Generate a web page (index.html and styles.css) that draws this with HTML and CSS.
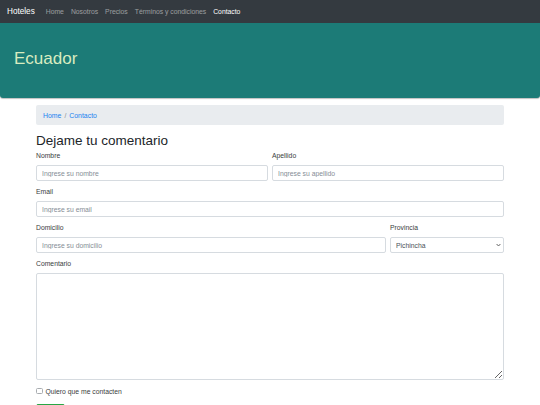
FILE: index.html
```html
<!DOCTYPE html>
<html lang="es">
<head>
<meta charset="utf-8">
<title>Hoteles - Contacto</title>
<link rel="stylesheet" href="styles.css">
</head>
<body>
<nav class="navbar">
  <a class="brand" href="#">Hoteles</a>
  <ul class="nav-links">
    <li><a href="#">Home</a></li>
    <li><a href="#">Nosotros</a></li>
    <li><a href="#">Precios</a></li>
    <li><a href="#">Términos y condiciones</a></li>
    <li><a class="active" href="#">Contacto</a></li>
  </ul>
</nav>
<header class="hero">
  <h1>Ecuador</h1>
</header>
<main class="container">
  <ol class="breadcrumb">
    <li><a href="#">Home</a></li>
    <li class="sep">/</li>
    <li><a href="#">Contacto</a></li>
  </ol>
  <h2 class="title">Dejame tu comentario</h2>
  <form class="form">
    <div class="row">
      <div class="group grow">
        <label>Nombre</label>
        <input class="control" type="text" placeholder="Ingrese su nombre">
      </div>
      <div class="group grow">
        <label>Apellido</label>
        <input class="control" type="text" placeholder="Ingrese su apellido">
      </div>
    </div>
    <div class="group">
      <label>Email</label>
      <input class="control" type="email" placeholder="Ingrese su email">
    </div>
    <div class="row">
      <div class="group wide">
        <label>Domicilio</label>
        <input class="control" type="text" placeholder="Ingrese su domicilio">
      </div>
      <div class="group narrow">
        <label>Provincia</label>
        <div class="select-wrap">
          <select class="control select">
            <option>Pichincha</option>
            <option>Guayas</option>
            <option>Azuay</option>
          </select>
          <svg class="chev" width="5" height="4" viewBox="0 0 5 4"><path d="M0.6 1 L2.5 3 L4.4 1" fill="none" stroke="#555" stroke-width="0.9"/></svg>
        </div>
      </div>
    </div>
    <div class="group">
      <label>Comentario</label>
      <textarea class="control area"></textarea>
    </div>
    <div class="check">
      <input type="checkbox" id="c1">
      <label for="c1">Quiero que me contacten</label>
    </div>
    <button class="btn" type="submit">Enviar</button>
  </form>
</main>
</body>
</html>
```
FILE: styles.css
```css
* { box-sizing: border-box; }
html, body { margin: 0; padding: 0; }
body {
  font-family: "Liberation Sans", Arial, sans-serif;
  font-size: 7px;
  color: #3a3d40;
  background: #fff;
}
a { text-decoration: none; }

.navbar {
  height: 23px;
  background: #343a40;
  display: flex;
  align-items: center;
  padding: 0 7px;
}
.brand {
  color: #fff;
  font-size: 8.2px;
  margin-right: 7.5px;
}
.nav-links {
  list-style: none;
  margin: 0;
  padding: 0;
  display: flex;
}
.nav-links a {
  display: block;
  padding: 0 3.5px;
  color: rgba(255,255,255,0.5);
  font-size: 6.8px;
}
.nav-links a.active { color: #fff; }

.hero {
  height: 75px;
  background: #1c7b77;
  border-radius: 0 0 3px 3px;
  box-shadow: 0 1px 1px rgba(0,0,0,0.25);
  display: flex;
  align-items: center;
  padding: 0 14px;
}
.hero h1 {
  margin: 0 0 4px;
  font-weight: 400;
  font-size: 17px;
  color: #d9ecc0;
}

.container {
  width: 468px;
  margin: 7px auto 0;
}
.breadcrumb {
  list-style: none;
  margin: 0 0 8px;
  height: 20px;
  padding: 0 7px;
  background: #e9ecef;
  border-radius: 2px;
  display: flex;
  align-items: center;
  gap: 3px;
  font-size: 6.9px;
}
.breadcrumb a { color: #1a82f0; }
.breadcrumb .sep { color: #8a9096; }

.title {
  margin: 0 0 2px;
  font-size: 13.5px;
  line-height: 16px;
  font-weight: 400;
  color: #212529;
}

.form { display: block; }
.row {
  display: flex;
  gap: 4px;
}
.group { margin-bottom: 6px; }
.grow { flex: 1; }
.wide { flex: 1; }
.narrow { width: 114px; }
.group > label {
  display: block;
  line-height: 10px;
  margin-bottom: 4px;
  font-size: 6.8px;
}
.control {
  display: block;
  width: 100%;
  height: 16px;
  padding: 0 5px;
  font-family: inherit;
  font-size: 6.8px;
  color: #495057;
  background: #fff;
  border: 1px solid #d6dbe0;
  border-radius: 2px;
  outline: none;
}
.control::placeholder { color: #868e96; }
.select-wrap { position: relative; }
.select {
  -webkit-appearance: none;
  appearance: none;
  padding-left: 5px;
}
.chev {
  position: absolute;
  right: 3px;
  top: 6px;
}
.area {
  height: 107px;
  resize: vertical;
  padding: 3px 5px;
}
.check {
  display: flex;
  align-items: center;
  height: 10px;
  margin-bottom: 8px;
  font-size: 6.8px;
}
.check input {
  -webkit-appearance: none;
  appearance: none;
  margin: 0 3px 0 0;
  width: 6.5px;
  height: 6.5px;
  border: 1px solid #a8acb0;
  border-radius: 1.5px;
  background: #fff;
}
.btn {
  display: block;
  width: 29px;
  height: 16px;
  padding: 5px 0 0;
  line-height: 8px;
  font-family: inherit;
  font-size: 7px;
  color: #fff;
  background: #28a745;
  border: 1px solid #28a745;
  border-radius: 2px;
}
```
